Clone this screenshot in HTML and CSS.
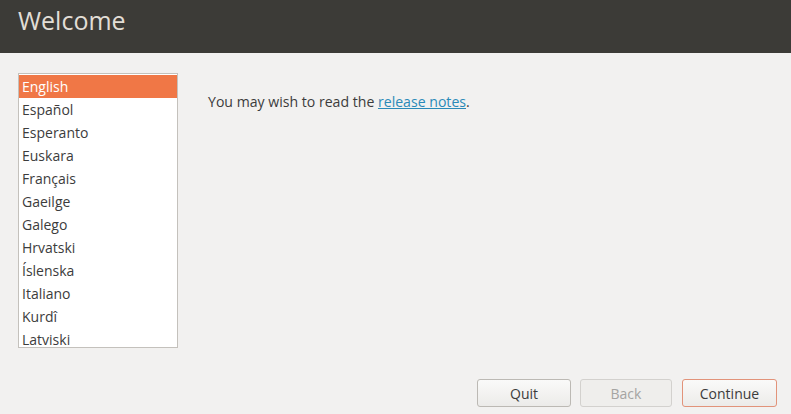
FILE: index.html
```html
<!DOCTYPE html>
<html lang="en">
<head>
  <meta charset="UTF-8">
  <title>Welcome</title>
  <link rel="stylesheet" href="styles.css">
</head>
<body>
  <div class="window">
    <div class="header">
      <h1 class="title">Welcome</h1>
    </div>

    <div class="content">
      <ul class="lang-list">
        <li class="selected">English</li>
        <li>Español</li>
        <li>Esperanto</li>
        <li>Euskara</li>
        <li>Français</li>
        <li>Gaeilge</li>
        <li>Galego</li>
        <li>Hrvatski</li>
        <li>Íslenska</li>
        <li>Italiano</li>
        <li>Kurdî</li>
        <li>Latviski</li>
      </ul>

      <p class="notes">You may wish to read the <a href="#">release notes</a>.</p>
    </div>

    <div class="footer">
      <button class="btn">Quit</button>
      <button class="btn back" disabled>Back</button>
      <button class="btn primary">Continue</button>
    </div>
  </div>
</body>
</html>
```

FILE: styles.css
```css
html, body {
  margin: 0;
  padding: 0;
}

body {
  font-family: "Open Sans", "DejaVu Sans", sans-serif;
  font-size: 14px;
  color: #3c3c3c;
  background-color: #f2f1f0;
}

.window {
  width: 791px;
  height: 414px;
  display: flex;
  flex-direction: column;
}

.header {
  height: 53px;
  background-color: #3c3b37;
  padding-left: 18px;
  display: flex;
  align-items: center;
  box-sizing: border-box;
}

.title {
  margin: 0 0 14px 0;
  font-size: 25px;
  font-weight: normal;
  color: #e2ded6;
}

.content {
  display: flex;
  align-items: flex-start;
  padding: 20px 0 0 18px;
  flex: 1;
}

.lang-list {
  list-style: none;
  margin: 0;
  padding: 1px 0 0 0;
  width: 158px;
  height: 272px;
  overflow: hidden;
  background-color: #fff;
  border: 1px solid #c4c1bc;
}

.lang-list li {
  height: 23px;
  line-height: 23px;
  padding-left: 3px;
  color: #3c3c3c;
}

.lang-list li.selected {
  background-color: #f07746;
  color: #fff;
}

.notes {
  margin: 19px 0 0 30px;
  font-size: 14.1px;
}

.notes a {
  color: #2a8ab8;
  text-decoration: underline;
}

.footer {
  display: flex;
  justify-content: flex-end;
  gap: 9px;
  padding: 0 14px 7px 0;
}

.btn {
  font-family: inherit;
  font-size: 14px;
  width: 94px;
  height: 28px;
  padding: 0;
  color: #3c3c3c;
  background: linear-gradient(#fafaf9, #ecebe9);
  border: 1px solid #bcb9b4;
  border-radius: 3px;
}

.btn.back {
  width: 92px;
  margin-right: 1px;
}

.btn:disabled {
  color: #a5a4a2;
  background: #efeeec;
  border-color: #d3d1ce;
}

.btn.primary {
  width: 95px;
  border-color: #e2937a;
}
```
